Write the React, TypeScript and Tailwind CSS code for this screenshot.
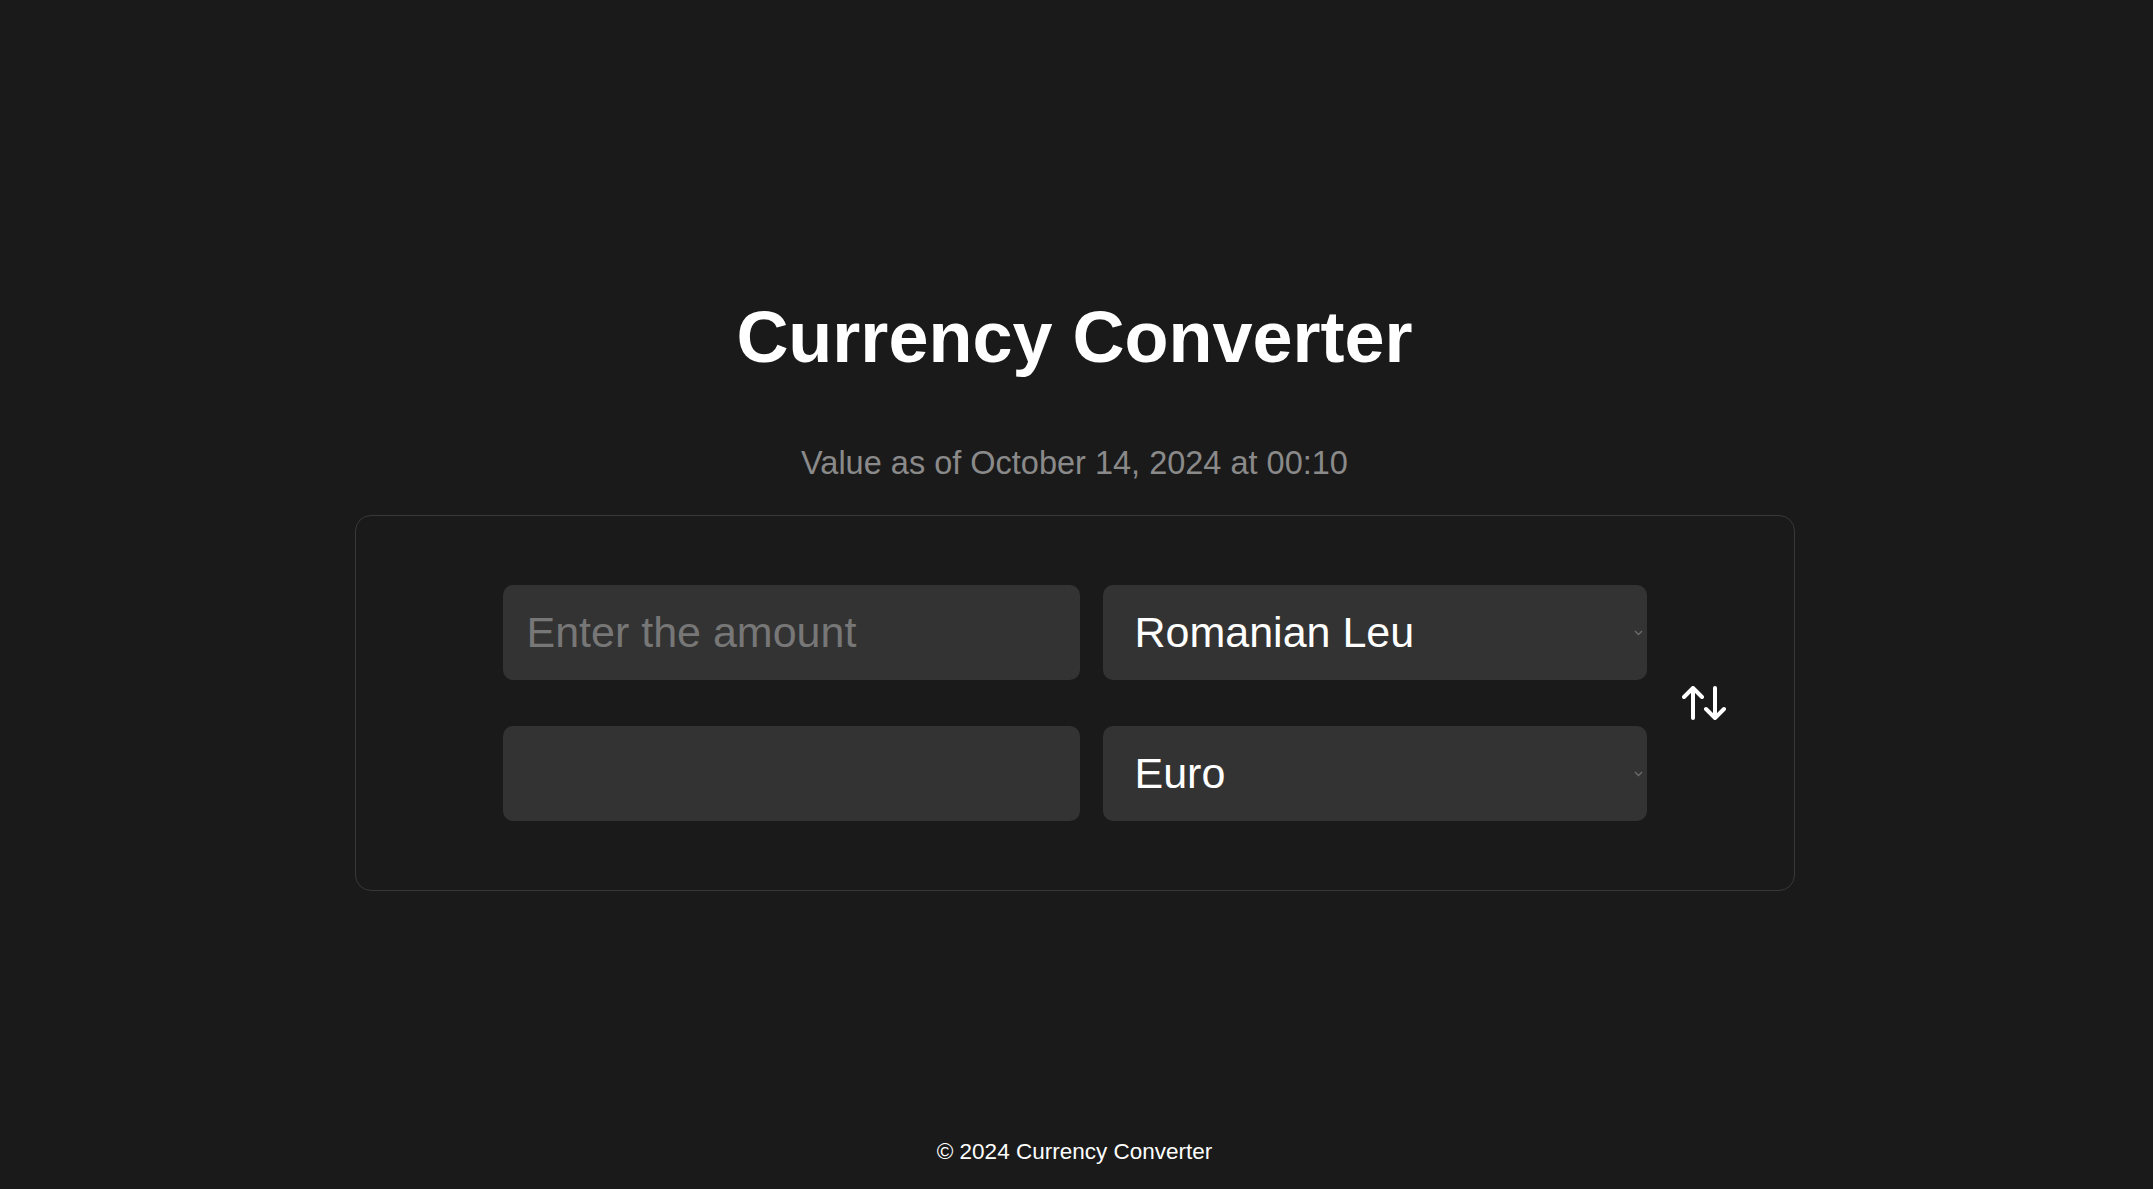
import React, { useState } from 'react';

const currencies = ['Romanian Leu', 'Euro', 'US Dollar', 'British Pound', 'Swiss Franc'];

const SwapIcon = () => (
    <svg width="44" height="34" viewBox="0 0 44 34" fill="none" stroke="white" strokeWidth="4" strokeLinecap="round" strokeLinejoin="round">
        <path d="M11 32V2M2 11l9-9 9 9" />
        <path d="M33 2v30M24 23l9 9 9-9" />
    </svg>
);

const CurrencySelect = ({ value, onChange }: { value: string; onChange: (v: string) => void }) => (
    <div className="relative w-[544px] h-[95px]">
        <select
            value={value}
            onChange={e => onChange(e.target.value)}
            className="appearance-none w-full h-full rounded-[10px] bg-[#333333] text-white text-[43px] pl-[32px] pr-6 outline-none"
        >
            {currencies.map(c => (
                <option key={c} value={c}>{c}</option>
            ))}
        </select>
        {/* native-looking tiny chevron */}
        <svg className="absolute right-[4px] top-1/2 -translate-y-1/2 pointer-events-none" width="9" height="6" viewBox="0 0 9 6" fill="none" stroke="#6b6b6b" strokeWidth="1.4">
            <path d="M1 1l3.5 3.5L8 1" />
        </svg>
    </div>
);

export default function App() {
    const [amount, setAmount] = useState('');
    const [from, setFrom] = useState('Romanian Leu');
    const [to, setTo] = useState('Euro');

    const swap = () => {
        setFrom(to);
        setTo(from);
    };

    return (
        <div className="min-h-screen flex flex-col pr-[4px] bg-[#1a1a1a] text-white font-['Liberation_Sans',Arial,sans-serif]">
            <main className="flex flex-col items-center pt-[297px]">
                <h1 className="text-[72px] leading-[80px] font-bold">Currency Converter</h1>
                <p className="mt-[68px] text-[32.5px] leading-[36px] text-[#8a8a8a]">Value as of October 14, 2024 at 00:10</p>

                <div className="mt-[34px] w-[1440px] h-[376px] border border-[#383838] rounded-[16px] flex items-center pl-[147px]">
                    <div className="flex flex-col gap-[46px]">
                        <div className="flex gap-[23px]">
                            <input
                                type="number"
                                value={amount}
                                onChange={e => setAmount(e.target.value)}
                                placeholder="Enter the amount"
                                className="w-[577px] h-[95px] rounded-[10px] bg-[#333333] text-white text-[43px] pl-[24px] outline-none placeholder:text-[#777777]"
                            />
                            <CurrencySelect value={from} onChange={setFrom} />
                        </div>
                        <div className="flex gap-[23px]">
                            <input
                                type="text"
                                readOnly
                                value=""
                                className="w-[577px] h-[95px] rounded-[10px] bg-[#333333] text-white text-[43px] pl-[24px] outline-none"
                            />
                            <CurrencySelect value={to} onChange={setTo} />
                        </div>
                    </div>
                    <button onClick={swap} className="ml-[35px] flex items-center justify-center" aria-label="Swap currencies">
                        <SwapIcon />
                    </button>
                </div>
            </main>

            <footer className="mt-auto pb-[24px] text-center text-[22.5px] leading-[26px]">
                © 2024 Currency Converter
            </footer>
        </div>
    );
}
